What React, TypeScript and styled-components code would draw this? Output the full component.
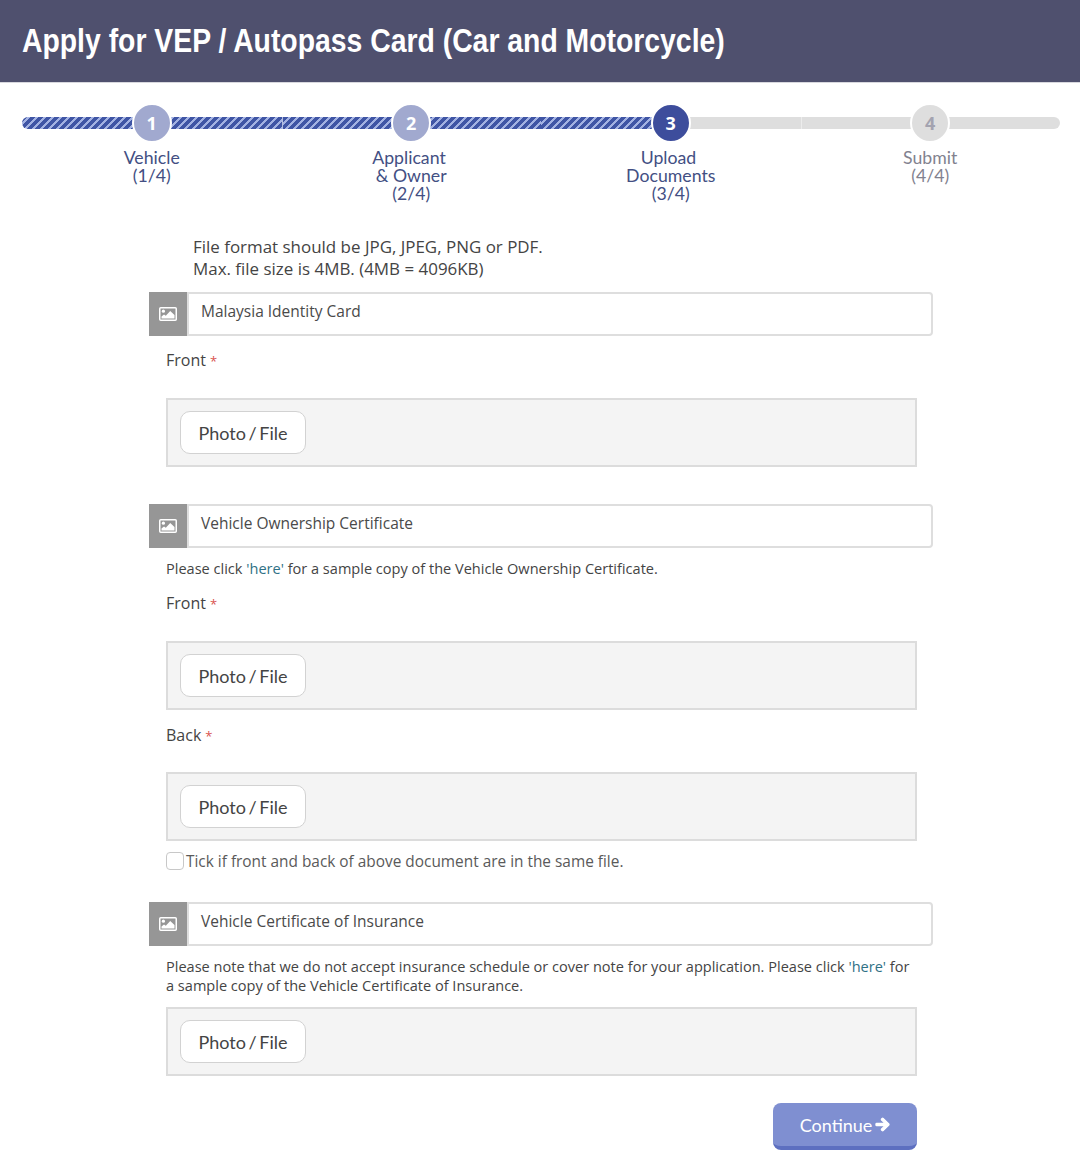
import React from "react";
import styled, { createGlobalStyle } from "styled-components";
import { FaArrowRight } from "react-icons/fa";

const GlobalStyle = createGlobalStyle`
  html, body {
    margin: 0;
    padding: 0;
    background: #fff;
  }
  * {
    box-sizing: border-box;
  }
`;

const Page = styled.div`
  width: 1080px;
  min-height: 1171px;
  overflow: hidden;
  font-family: "Open Sans", sans-serif;
  color: #444;
`;

const Header = styled.header`
  height: 83px;
  background: #4f506e;
  border-bottom: 1px solid #d8d8de;
  padding-left: 22px;
  display: flex;
  align-items: center;
`;

// no condensed face is installed, so the bold sans is squeezed to the same width
const Title = styled.h1`
  margin: 0 0 2px;
  font-family: "Liberation Sans", sans-serif;
  font-size: 34px;
  font-weight: 700;
  color: #fff;
  white-space: nowrap;
  transform: scaleX(0.834);
  transform-origin: left center;
`;

const Stepper = styled.div`
  display: grid;
  grid-template-columns: repeat(4, 259.5px);
  padding: 20px 0 0 22px;
  height: 146px;
`;

const Step = styled.div`
  display: flex;
  flex-direction: column;
  align-items: center;
`;

const stripes = `
  background-color: #3f55a5;
  background-image: linear-gradient(
    -45deg,
    #a3b2e2 18%,
    transparent 18%,
    transparent 50%,
    #a3b2e2 50%,
    #a3b2e2 68%,
    transparent 68%,
    transparent
  );
  background-size: 8px 8px;
`;

const Track = styled.div<{
  $done: boolean;
  $seam: boolean;
  $first?: boolean;
  $last?: boolean;
}>`
  position: relative;
  width: 100%;
  height: 40px;
  display: flex;
  align-items: center;
  justify-content: center;

  &::before {
    content: "";
    position: absolute;
    left: 0;
    right: 0;
    top: 14px;
    height: 12px;
    ${(p) => (p.$done ? stripes : "background: #dedede;")}
    border-left: ${(p) =>
      p.$seam ? `1px solid ${p.$done ? "#b5bfdf" : "#ececec"}` : "0"};
    border-radius: ${(p) =>
      p.$first ? "6px 0 0 6px" : p.$last ? "0 6px 6px 0" : "0"};
  }
`;

const HalfTrack = styled.div`
  position: absolute;
  left: 50%;
  right: 0;
  top: 14px;
  height: 12px;
  background: #dedede;
`;

const Circle = styled.div<{ $state: "done" | "active" | "todo" }>`
  position: relative;
  width: 40px;
  height: 40px;
  border-radius: 50%;
  border: 2px solid #fff;
  display: flex;
  align-items: center;
  justify-content: center;
  font-family: "Open Sans", sans-serif;
  font-size: 18px;
  font-weight: 700;
  background: ${(p) =>
    p.$state === "active" ? "#3d4d9c" : p.$state === "done" ? "#a1a9cf" : "#dedede"};
  color: ${(p) => (p.$state === "todo" ? "#a3a3b0" : "#fff")};
`;

const StepLabel = styled.div<{ $muted: boolean }>`
  margin-top: 6px;
  font-family: Lato, sans-serif;
  font-size: 17.7px;
  line-height: 18px;
  text-align: center;
  color: ${(p) => (p.$muted ? "#82828f" : "#434f83")};
`;

const Form = styled.div`
  width: 784px;
  margin-left: 149px;
  padding-top: 7px;
`;

const Note = styled.p`
  margin: 0 0 12px 44px;
  font-size: 16.95px;
  line-height: 22px;
  color: #444;
`;

const Section = styled.section<{ $gap: number }>`
  margin-bottom: ${(p) => p.$gap}px;
`;

const SectionHeader = styled.div`
  display: flex;
  height: 44px;
`;

const SectionIcon = styled.div`
  width: 38px;
  background: #969696;
  display: flex;
  align-items: center;
  justify-content: center;
`;

const SectionTitle = styled.div`
  flex: 1;
  border: 2px solid #dedede;
  border-radius: 0 4px 4px 0;
  padding: 6px 0 0 12px;
  font-size: 15.5px;
  line-height: 22px;
  color: #4a4a4a;
`;

const Body = styled.div`
  width: 751px;
  margin-left: 17px;
`;

const FieldLabel = styled.div<{ $top: number; $bottom: number }>`
  margin-top: ${(p) => p.$top}px;
  margin-bottom: ${(p) => p.$bottom}px;
  font-size: 16px;
  line-height: 24px;
  color: #444;
`;

const Required = styled.span`
  margin-left: 4px;
  font-size: 13px;
  line-height: 1;
  color: #d9534f;
`;

const UploadBox = styled.div`
  height: 69px;
  background: #f4f4f4;
  border: 2px solid #dcdcdc;
  padding: 11px 12px;
`;

const UploadButton = styled.button`
  width: 126px;
  height: 43px;
  padding: 0;
  background: #fff;
  border: 1px solid #d2d2d2;
  border-radius: 10px;
  font-family: Lato, sans-serif;
  font-size: 18px;
  word-spacing: -2px;
  color: #444;
`;

const Hint = styled.p<{ $top: number }>`
  margin: ${(p) => p.$top}px 0 0;
  font-size: 14.55px;
  line-height: 19px;
  color: #444;
`;

const HintLink = styled.a`
  color: #2f7185;
`;

const CheckRow = styled.label`
  display: flex;
  align-items: center;
  height: 24px;
  margin-top: 8px;
  font-size: 15.4px;
  color: #5a5a5a;
`;

const CheckBox = styled.span`
  width: 18px;
  height: 18px;
  margin-right: 2px;
  border: 1px solid #c8c8c8;
  border-radius: 4px;
  background: #fff;
`;

const UploadGap = styled.div`
  height: 12px;
`;

const Actions = styled.div`
  display: flex;
  justify-content: flex-end;
  width: 768px;
  margin-top: 27px;
`;

const ContinueButton = styled.button`
  width: 144px;
  height: 47px;
  padding: 0;
  display: flex;
  align-items: center;
  justify-content: center;
  gap: 3px;
  background: #7f8fd1;
  border: 0;
  border-bottom: 4px solid #5d6fc0;
  border-radius: 8px;
  font-family: Lato, sans-serif;
  font-size: 18px;
  color: #fff;
`;

const PictureIcon = () => (
  <svg width="18" height="14" viewBox="0 0 18 14">
    <rect x="0.75" y="0.75" width="16.5" height="12.5" rx="1" fill="none" stroke="#fff" strokeWidth="1.5" />
    <circle cx="4.4" cy="4.2" r="1.6" fill="#fff" />
    <path d="M2.5 11.5 L2.5 9.5 L5 7.4 L6.8 8.8 L11.2 4 L15.5 8 L15.5 11.5 Z" fill="#fff" />
  </svg>
);

const Upload = () => (
  <UploadBox>
    <UploadButton type="button">Photo / File</UploadButton>
  </UploadBox>
);

type StepData = {
  number: number;
  lines: string[];
  state: "done" | "active" | "todo";
};

const steps: StepData[] = [
  { number: 1, lines: ["Vehicle", "(1/4)"], state: "done" },
  { number: 2, lines: ["Applicant\u00a0", "& Owner", "(2/4)"], state: "done" },
  { number: 3, lines: ["Upload\u00a0", "Documents", "(3/4)"], state: "active" },
  { number: 4, lines: ["Submit", "(4/4)"], state: "todo" },
];

export default function App() {
  return (
    <Page>
      <GlobalStyle />
      <Header>
        <Title>Apply for VEP / Autopass Card (Car and Motorcycle)</Title>
      </Header>

      <Stepper>
        {steps.map((step, i) => (
          <Step key={step.number}>
            <Track
              $done={step.state !== "todo"}
              $seam={i % 2 === 1}
              $first={i === 0}
              $last={i === steps.length - 1}
            >
              {step.state === "active" && <HalfTrack />}
              <Circle $state={step.state}>{step.number}</Circle>
            </Track>
            <StepLabel $muted={step.state === "todo"}>
              {step.lines.map((line) => (
                <div key={line}>{line}</div>
              ))}
            </StepLabel>
          </Step>
        ))}
      </Stepper>

      <Form>
        <Note>
          File format should be JPG, JPEG, PNG or PDF.
          <br />
          Max. file size is 4MB. (4MB = 4096KB)
        </Note>

        <Section $gap={37}>
          <SectionHeader>
            <SectionIcon>
              <PictureIcon />
            </SectionIcon>
            <SectionTitle>Malaysia Identity Card</SectionTitle>
          </SectionHeader>
          <Body>
            <FieldLabel $top={12} $bottom={26}>
              Front<Required>*</Required>
            </FieldLabel>
            <Upload />
          </Body>
        </Section>

        <Section $gap={29}>
          <SectionHeader>
            <SectionIcon>
              <PictureIcon />
            </SectionIcon>
            <SectionTitle>Vehicle Ownership Certificate</SectionTitle>
          </SectionHeader>
          <Body>
            <Hint $top={11}>
              Please click <HintLink>'here'</HintLink> for a sample copy of the
              Vehicle Ownership Certificate.
            </Hint>
            <FieldLabel $top={13} $bottom={26}>
              Front<Required>*</Required>
            </FieldLabel>
            <Upload />
            <FieldLabel $top={13} $bottom={25}>
              Back<Required>*</Required>
            </FieldLabel>
            <Upload />
            <CheckRow>
              <CheckBox />
              Tick if front and back of above document are in the same file.
            </CheckRow>
          </Body>
        </Section>

        <Section $gap={0}>
          <SectionHeader>
            <SectionIcon>
              <PictureIcon />
            </SectionIcon>
            <SectionTitle>Vehicle Certificate of Insurance</SectionTitle>
          </SectionHeader>
          <Body>
            <Hint $top={11}>
              Please note that we do not accept insurance schedule or cover note
              for your application. Please click <HintLink>'here'</HintLink> for
              a sample copy of the Vehicle Certificate of Insurance.
            </Hint>
            <UploadGap />
            <Upload />
          </Body>
        </Section>

        <Actions>
          <ContinueButton type="button">
            Continue
            <FaArrowRight size={15} stroke="#fff" strokeWidth={40} />
          </ContinueButton>
        </Actions>
      </Form>
    </Page>
  );
}
